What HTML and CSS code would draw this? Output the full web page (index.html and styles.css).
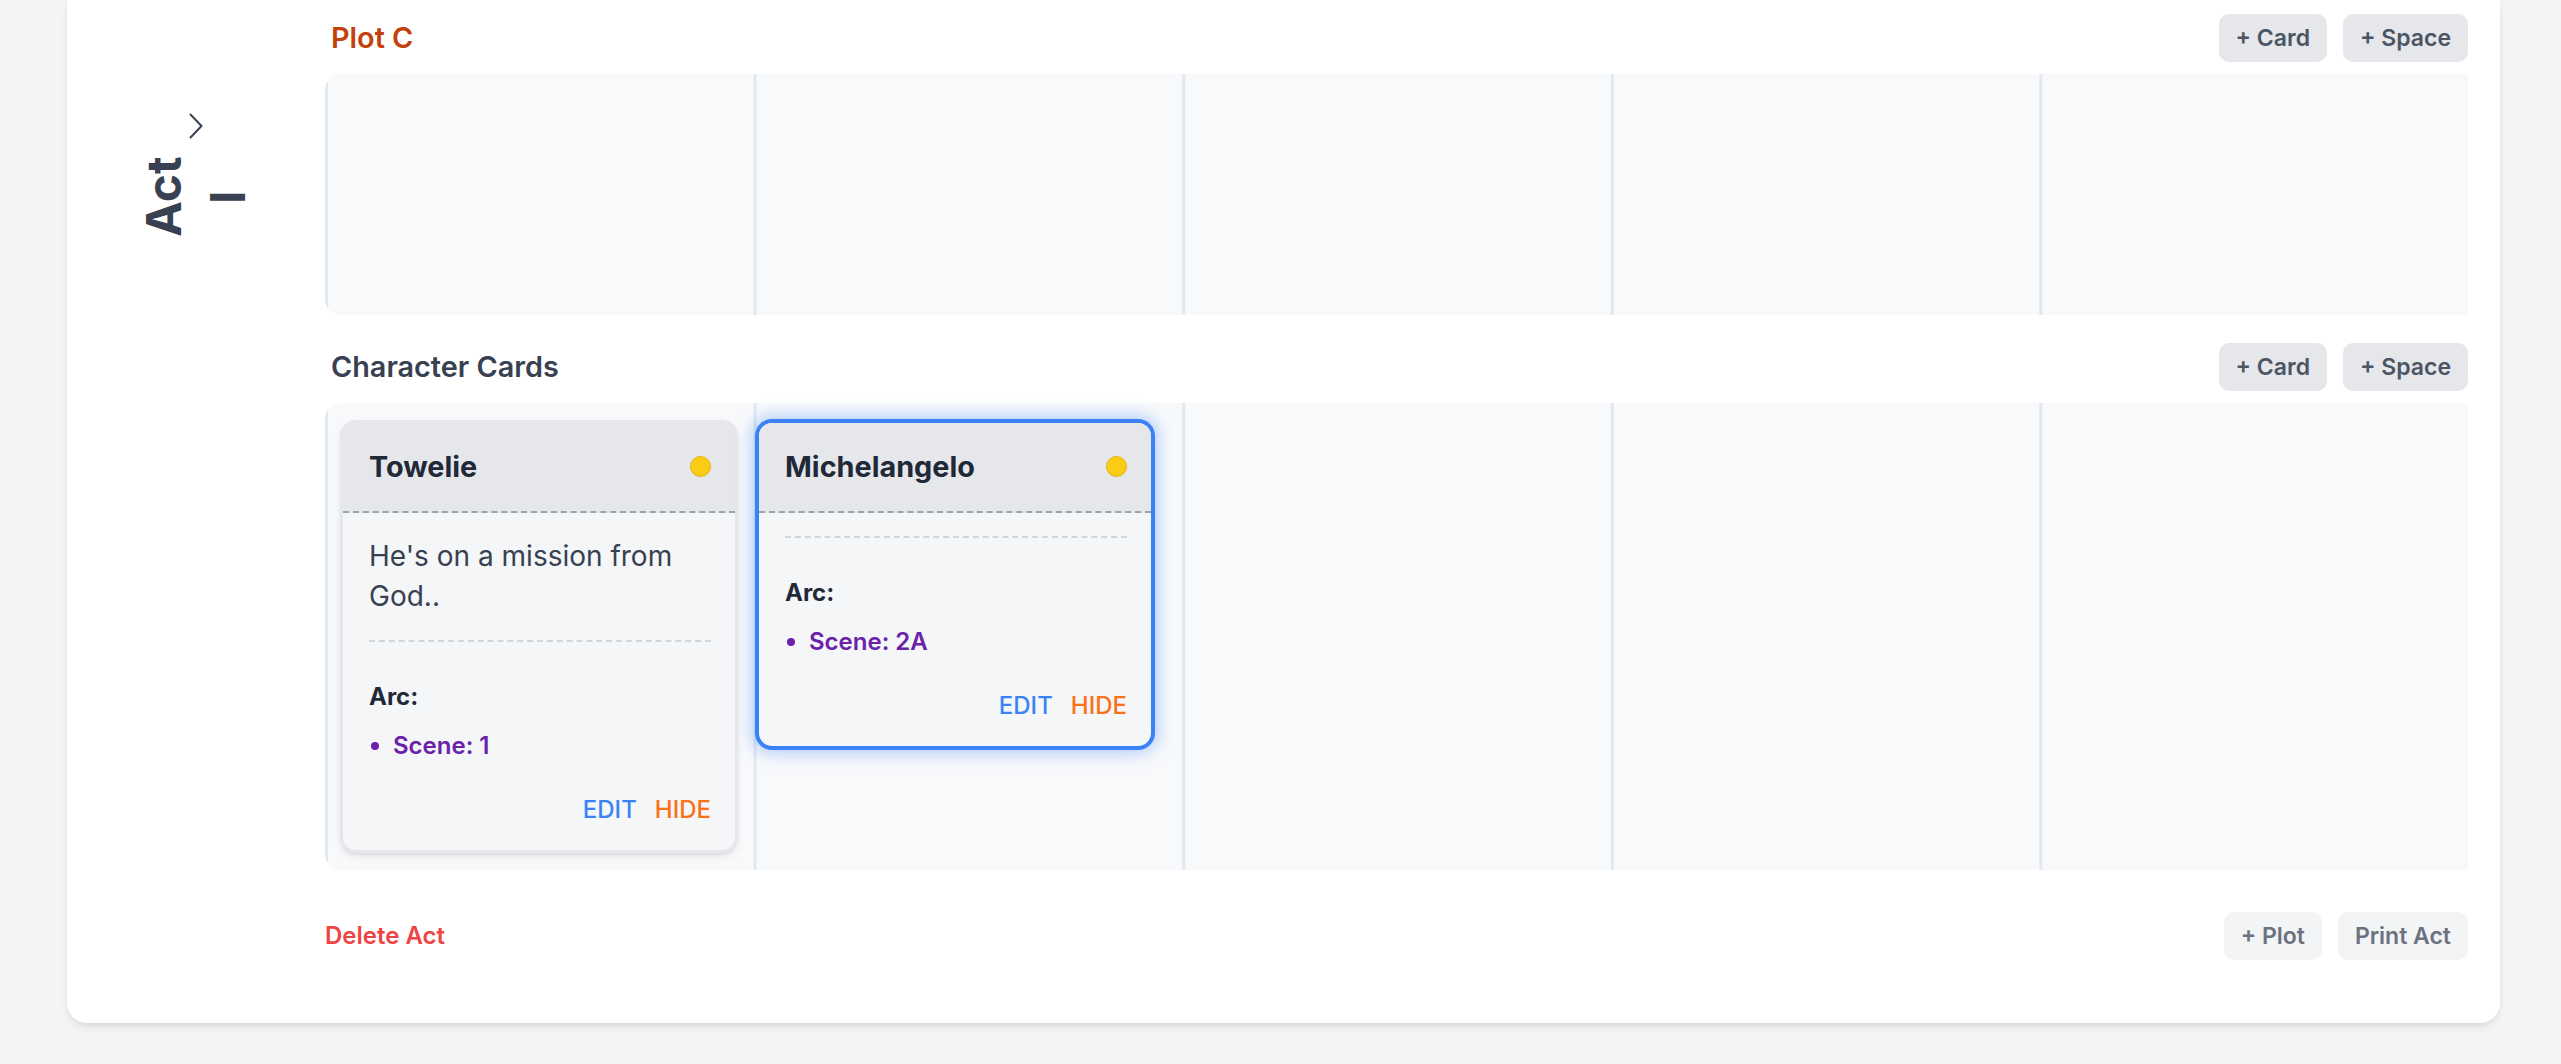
FILE: index.html
```html
<!DOCTYPE html>
<html lang="en">
<head>
<meta charset="utf-8">
<title>Act I</title>
<link rel="stylesheet" href="styles.css">
</head>
<body>
<div class="page">
  <div class="act-card">
    <aside class="act-side">
      <button class="collapse" aria-label="Collapse act">
        <svg width="16" height="26" viewBox="0 0 16 26" aria-hidden="true"><path d="M2.5 1.5 L13.5 13 L2.5 24.5" fill="none" stroke="#374151" stroke-width="2" stroke-linecap="round" stroke-linejoin="round"/></svg>
      </button>
      <h2 class="act-title">Act I</h2>
    </aside>
    <main class="act-main">
      <section class="lane">
        <div class="lane-head">
          <h3 class="lane-title lane-title--plot">Plot C</h3>
          <div class="lane-actions">
            <button class="btn">+ Card</button>
            <button class="btn">+ Space</button>
          </div>
        </div>
        <div class="lane-track lane-track--plot"></div>
      </section>
      <section class="lane lane--chars">
        <div class="lane-head">
          <h3 class="lane-title">Character Cards</h3>
          <div class="lane-actions">
            <button class="btn">+ Card</button>
            <button class="btn">+ Space</button>
          </div>
        </div>
        <div class="lane-track lane-track--cards">
          <article class="char-card">
            <header class="char-head">
              <h4 class="char-name">Towelie</h4>
              <span class="status-dot"></span>
            </header>
            <div class="char-body">
              <p class="char-desc">He's on a mission from God..</p>
              <div class="char-sep"></div>
              <div class="arc-label">Arc:</div>
              <ul class="arc-list"><li>Scene: 1</li></ul>
              <div class="char-actions"><button class="link link--edit">EDIT</button><button class="link link--hide">HIDE</button></div>
            </div>
          </article>
          <article class="char-card char-card--selected">
            <header class="char-head">
              <h4 class="char-name">Michelangelo</h4>
              <span class="status-dot"></span>
            </header>
            <div class="char-body">
              <div class="char-sep"></div>
              <div class="arc-label">Arc:</div>
              <ul class="arc-list"><li>Scene: 2A</li></ul>
              <div class="char-actions"><button class="link link--edit">EDIT</button><button class="link link--hide">HIDE</button></div>
            </div>
          </article>
        </div>
      </section>
      <footer class="act-footer">
        <button class="delete">Delete Act</button>
        <div class="lane-actions">
          <button class="btn btn--light">+ Plot</button>
          <button class="btn btn--light">Print Act</button>
        </div>
      </footer>
    </main>
  </div>
</div>
</body>
</html>
```

FILE: styles.css
```css
* { box-sizing: border-box; }
html, body { margin: 0; padding: 0; }
body {
  background: #f3f4f6;
  font-family: Inter, "Noto Sans", "Liberation Sans", sans-serif;
  color: #374151;
}
button { font-family: inherit; cursor: pointer; }
h2, h3, h4, p, ul { margin: 0; padding: 0; }

.page {
  padding: 0 61px 40px 67px;
}
.act-card {
  display: flex;
  background: #ffffff;
  border-radius: 0 0 20px 20px;
  box-shadow: 0 5px 10px -2px rgba(0,0,0,0.10), 0 2px 5px -2px rgba(0,0,0,0.06);
  padding: 0 32px 63px 0;
}

.act-side {
  width: 258px;
  flex: none;
  display: flex;
  flex-direction: column;
  align-items: center;
  padding-top: 113px;
}
.collapse {
  border: 0;
  background: none;
  padding: 0;
  width: 16px;
  height: 26px;
  display: block;
}
.collapse svg { display: block; }
.act-title {
  margin-top: 13px;
  writing-mode: vertical-rl;
  transform: rotate(180deg);
  height: 90px;
  font-size: 48px;
  line-height: 64px;
  font-weight: 700;
  color: #374151;
  text-align: center;
}

.act-main {
  flex: 1;
  min-width: 0;
  padding-top: 14px;
}
.lane + .lane { margin-top: 28px; }
.lane-head {
  display: flex;
  justify-content: space-between;
  align-items: center;
  height: 48px;
  margin-bottom: 12px;
}
.lane-title {
  font-size: 28.8px;
  line-height: 40px;
  font-weight: 600;
  color: #374151;
  padding-left: 6px;
}
.lane-title--plot { color: #c2410c; }
.lane-actions {
  display: flex;
  gap: 16px;
}
.btn {
  height: 48px;
  padding: 0 17px;
  border: 0;
  border-radius: 10px;
  background: #e5e7eb;
  color: #4b5563;
  font-size: 23px;
  font-weight: 600;
  line-height: 48px;
}
.btn--light {
  background: #f3f4f6;
  color: #6b7280;
}

.lane-track {
  background-color: #f8f9fb;
  background-image: linear-gradient(to right, #e2e8f0 0, #e2e8f0 3px, transparent 3px);
  background-size: 20% 100%;
  border-radius: 16px 0 0 16px;
}
.lane-track--plot { height: 241px; }
.lane-track--cards {
  display: flex;
  align-items: flex-start;
  gap: 18px;
  padding: 17px 15px 15px 15px;
  min-height: 467px;
}

.char-card {
  width: 398px;
  flex: none;
  border: 3px solid #e5e7eb;
  border-radius: 16px;
  background: #f5f6f8;
  box-shadow: 0 4px 8px -2px rgba(0,0,0,0.12), 0 2px 4px -2px rgba(0,0,0,0.08);
  overflow: hidden;
}
.char-card--selected {
  border-color: #3b82f6;
  box-shadow: 0 0 0 1px #3b82f6, 0 0 16px 4px rgba(59,130,246,0.38);
}
.char-head {
  display: flex;
  justify-content: space-between;
  align-items: center;
  background: #e5e7eb;
  padding: 21px 24px 22px 26px;
  border-bottom: 2px dashed #9ca3af;
}
.char-name {
  font-size: 28.8px;
  line-height: 45px;
  font-weight: 700;
  color: #1f2937;
}
.status-dot {
  width: 21px;
  height: 21px;
  border-radius: 50%;
  background: #facc15;
  border: 1.5px solid #eab308;
}
.char-body {
  padding: 23px 24px 24px 26px;
}
.char-desc {
  font-size: 28px;
  line-height: 40px;
  color: #374151;
  margin-bottom: 24px;
}
.char-sep {
  border-top: 2px dashed #d1d5db;
  margin-bottom: 39px;
}
.arc-label {
  font-size: 24px;
  line-height: 32px;
  font-weight: 700;
  color: #1f2937;
  margin-bottom: 17px;
}
.arc-list {
  list-style: none;
  margin-bottom: 32px;
}
.arc-list li {
  display: flex;
  align-items: center;
  font-size: 24px;
  line-height: 32px;
  font-weight: 600;
  color: #6b21a8;
}
.arc-list li::before {
  content: "";
  width: 8px;
  height: 8px;
  border-radius: 50%;
  background: #6b21a8;
  margin: 0 14px 0 2px;
}
.char-actions {
  display: flex;
  justify-content: flex-end;
  gap: 18px;
}
.link {
  border: 0;
  background: none;
  padding: 0;
  font-size: 24px;
  line-height: 32px;
  font-weight: 500;
}
.link--edit { color: #3b82f6; }
.link--hide { color: #f97316; }

.act-footer {
  display: flex;
  justify-content: space-between;
  align-items: center;
  margin-top: 42px;
  height: 48px;
}
.delete {
  border: 0;
  background: none;
  padding: 0;
  color: #ef4444;
  font-size: 24px;
  font-weight: 600;
  line-height: 32px;
}
```
